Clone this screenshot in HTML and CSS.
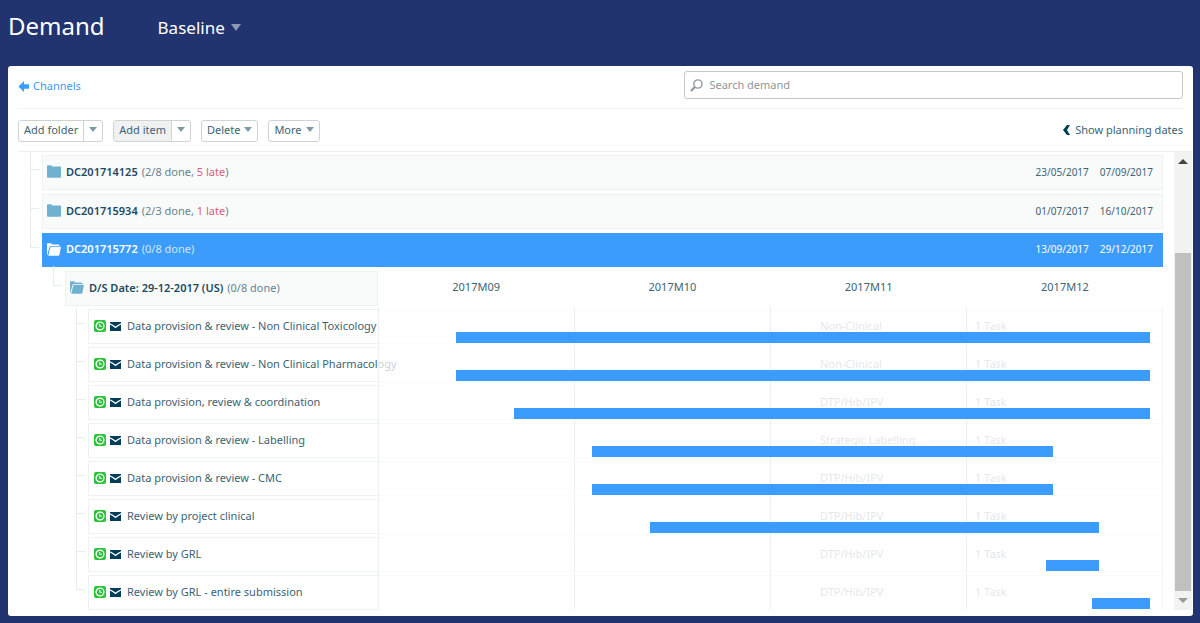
FILE: index.html
```html
<!DOCTYPE html>
<html lang="en">
<head>
<meta charset="utf-8">
<title>Demand</title>
<link rel="stylesheet" href="styles.css">
</head>
<body>
<svg class="sprite" aria-hidden="true">
  <symbol id="folder" viewBox="0 0 14 13"><path d="M0 1.2Q0 .3.9.3H4Q4.8.3 4.9 1.6H13Q14 1.6 14 2.6V12Q14 12.8 13.1 12.8H.9Q0 12.8 0 12Z"/></symbol>
  <symbol id="folder-open" viewBox="0 0 14 13"><path d="M0 1.2Q0 .3.9.3H4Q4.8.3 4.9 1.4H11.6Q12.4 1.4 12.4 2.2V3H4Q2.9 3 2.5 4L.7 10.5V12.2Q0 12 0 11Z"/><path d="M4.3 3.8H14L12.4 11.8Q12.2 12.8 11.2 12.8H1.3L3.3 4.6Q3.5 3.8 4.3 3.8Z"/></symbol>
  <symbol id="clock" viewBox="0 0 12 12"><rect width="12" height="12" rx="2" fill="#2fc139"/><circle cx="6" cy="6" r="3.9" fill="none" stroke="#fff" stroke-width="1.3"/><path d="M5.7 3.8V6.3H7.8" fill="none" stroke="#fff"/></symbol>
  <symbol id="mail" viewBox="0 0 11 9"><path d="M0 0H11V1.2Q8 2.6 5.5 4.6Q3 2.6 0 1.2ZM0 2.6Q3 4.2 5.5 6.2Q8 4.2 11 2.6V9H0Z"/></symbol>
</svg>
<header class="topbar">
  <h1>Demand</h1>
  <button class="scenario" type="button">Baseline <span class="caret"></span></button>
</header>
<main class="panel">
  <div class="searchbar">
    <a class="back" href="#"><svg width="11" height="11" viewBox="0 0 11 11" aria-hidden="true"><path d="M.5 5.5L6 0V3.3H11V7.7H6V11Z"/></svg>Channels</a>
    <label class="search">
      <svg width="13" height="13" viewBox="0 0 13 13" aria-hidden="true"><circle cx="7.9" cy="5" r="4.1"/><path d="M4.9 8L1 12" stroke-width="2.4"/></svg>
      <input type="search" placeholder="Search demand" aria-label="Search demand">
    </label>
  </div>
  <div class="toolbar">
    <div class="split"><button type="button">Add folder</button><button type="button" aria-label="Add folder options"><span class="caret"></span></button></div>
    <div class="split"><button class="pressed" type="button">Add item</button><button type="button" aria-label="Add item options"><span class="caret"></span></button></div>
    <div class="split"><button type="button">Delete <span class="caret"></span></button></div>
    <div class="split"><button type="button">More <span class="caret"></span></button></div>
    <button class="planning" type="button"><svg width="7" height="10" viewBox="0 0 7 10" aria-hidden="true"><path d="M4 0H7L4 5L7 10H4L0 5Z"/></svg>Show planning dates</button>
  </div>
  <div class="content">
    <div class="tree">
      <ul class="folders">
        <li class="row folder"><svg class="ico"><use href="#folder"/></svg><b>DC201714125</b><span class="count">(2/8 done, <em>5 late</em>)</span><time>23/05/2017</time><time>07/09/2017</time></li>
        <li class="row folder"><svg class="ico"><use href="#folder"/></svg><b>DC201715934</b><span class="count">(2/3 done, <em>1 late</em>)</span><time>01/07/2017</time><time>16/10/2017</time></li>
        <li class="row folder active"><svg class="ico"><use href="#folder-open"/></svg><b>DC201715772</b><span class="count">(0/8 done)</span><time>13/09/2017</time><time>29/12/2017</time></li>
      </ul>
      <div class="plan-head">
        <div class="row folder sub"><svg class="ico"><use href="#folder-open"/></svg><b>D/S Date: 29-12-2017 (US)</b><span class="count">(0/8 done)</span></div>
        <div class="months"><span>2017M09</span><span>2017M10</span><span>2017M11</span><span>2017M12</span></div>
      </div>
      <div class="plan">
        <ul class="tasks">
          <li class="row"><svg class="clock"><use href="#clock"/></svg><svg class="mail"><use href="#mail"/></svg><span class="name">Data provision &amp; review - Non Clinical Toxicology</span><span class="team">Non-Clinical</span><span class="amount">1 Task</span></li>
          <li class="row"><svg class="clock"><use href="#clock"/></svg><svg class="mail"><use href="#mail"/></svg><span class="name">Data provision &amp; review - Non Clinical Pharmacology</span><span class="team">Non-Clinical</span><span class="amount">1 Task</span></li>
          <li class="row"><svg class="clock"><use href="#clock"/></svg><svg class="mail"><use href="#mail"/></svg><span class="name">Data provision, review &amp; coordination</span><span class="team">DTP/Hib/IPV</span><span class="amount">1 Task</span></li>
          <li class="row"><svg class="clock"><use href="#clock"/></svg><svg class="mail"><use href="#mail"/></svg><span class="name">Data provision &amp; review - Labelling</span><span class="team">Strategic Labelling</span><span class="amount">1 Task</span></li>
          <li class="row"><svg class="clock"><use href="#clock"/></svg><svg class="mail"><use href="#mail"/></svg><span class="name">Data provision &amp; review - CMC</span><span class="team">DTP/Hib/IPV</span><span class="amount">1 Task</span></li>
          <li class="row"><svg class="clock"><use href="#clock"/></svg><svg class="mail"><use href="#mail"/></svg><span class="name">Review by project clinical</span><span class="team">DTP/Hib/IPV</span><span class="amount">1 Task</span></li>
          <li class="row"><svg class="clock"><use href="#clock"/></svg><svg class="mail"><use href="#mail"/></svg><span class="name">Review by GRL</span><span class="team">DTP/Hib/IPV</span><span class="amount">1 Task</span></li>
          <li class="row"><svg class="clock"><use href="#clock"/></svg><svg class="mail"><use href="#mail"/></svg><span class="name">Review by GRL - entire submission</span><span class="team">DTP/Hib/IPV</span><span class="amount">1 Task</span></li>
        </ul>
        <div class="gridlines"><i></i><i></i><i></i><i></i></div>
        <div class="bars">
          <div class="lane"><div class="bar" style="margin-left:9.9%;width:88.4%"></div></div>
          <div class="lane"><div class="bar" style="margin-left:9.9%;width:88.4%"></div></div>
          <div class="lane"><div class="bar" style="margin-left:17.3%;width:81%"></div></div>
          <div class="lane"><div class="bar" style="margin-left:27.2%;width:58.8%"></div></div>
          <div class="lane"><div class="bar" style="margin-left:27.2%;width:58.8%"></div></div>
          <div class="lane"><div class="bar" style="margin-left:34.7%;width:57.1%"></div></div>
          <div class="lane"><div class="bar" style="margin-left:85.1%;width:6.7%"></div></div>
          <div class="lane"><div class="bar" style="margin-left:90.9%;width:7.4%"></div></div>
        </div>
      </div>
    </div>
    <div class="scrollbar" aria-hidden="true"><span class="arrow up"></span><span class="thumb"></span><span class="arrow down"></span></div>
  </div>
</main>
</body>
</html>
```
FILE: styles.css
```css
* { box-sizing: border-box; }
body {
  margin: 0;
  padding: 0 7px 7px 8px;
  background: #22346f;
  color: #3c6374;
  font: 11px/16px "Noto Sans", "Open Sans", sans-serif;
}
button, input { font: inherit; color: inherit; }
button { border: 0; background: none; padding: 0; cursor: pointer; }
ul { list-style: none; margin: 0; padding: 0; }
svg { flex: none; fill: currentColor; }
.sprite { display: none; }

.caret {
  display: inline-block;
  border: 4px solid transparent;
  border-top: 5px solid #7d9ba9;
  border-bottom: 0;
}

.topbar {
  display: flex;
  align-items: center;
  gap: 53px;
  height: 66px;
  padding-bottom: 15px;
  color: #fff;
  font-family: "Noto Sans", "Open Sans", sans-serif;
}
.topbar h1 { margin: 0; font-size: 24px; line-height: 34px; font-weight: 400; }
.scenario { display: flex; align-items: center; gap: 6px; padding-top: 4px; font-size: 17px; line-height: 24px; }
.scenario .caret { border-width: 7px 5px 0; border-top-color: #8d97b8; }

.panel {
  display: flex;
  flex-direction: column;
  min-height: calc(100vh - 73px);
  padding-bottom: 6px;
  border-radius: 3px;
  background: #fff;
}
.searchbar {
  display: flex;
  justify-content: space-between;
  margin: 0 10px;
  padding: 5px 0 9px;
  border-bottom: 1px solid #f3f5f5;
}
.back { display: flex; align-items: center; gap: 4px; padding-top: 2px; color: #3b9cfc; text-decoration: none; }
.search {
  display: flex;
  align-items: center;
  gap: 6px;
  flex: 0 0 42.8%;
  height: 28px;
  padding: 0 6px 0 5px;
  border: 1px solid #c6c8c9;
  border-radius: 3px;
}
.search svg { fill: none; stroke: #919ba3; stroke-width: 1.4; }
.search input { flex: 1; min-width: 0; padding: 0; border: 0; outline: 0; background: none; }
.search input::placeholder { color: #8f9699; opacity: 1; }

.toolbar { display: flex; align-items: center; gap: 10px; height: 42px; margin: 0 10px; padding-top: 1px; }
.split { display: flex; height: 22px; border: 1px solid #cfd3d4; border-radius: 3px; overflow: hidden; }
.split button { display: flex; align-items: center; gap: 4px; padding: 0 5px 2px; }
.split button + button { border-left: 1px solid #cfd3d4; }
.split .pressed { background: #f0f2f2; }
.planning { display: flex; align-items: center; gap: 5px; margin-left: auto; padding-bottom: 2px; }
.planning svg { color: #003d58; }

.content { display: flex; flex: 1; border-top: 1px solid #eceff0; margin-left: 10px; margin-right: 1px; }
.tree { flex: 1; overflow: hidden; padding: 3px 11px 0 24px; }
.folders { display: grid; gap: 4px; }
.row {
  position: relative;
  display: flex;
  align-items: center;
  height: 35px;
  padding-bottom: 1px;
  border: 1px solid #eff2f2;
}
.row::before {
  content: "";
  position: absolute;
  left: -13px;
  top: -27px;
  width: 8px;
  height: 40px;
  border: solid #e6edef;
  border-width: 0 0 1px 1px;
}
.folder { background: #f9fbfb; padding: 0 9px 2px 4px; }
.ico { width: 14px; height: 13px; margin-right: 5px; color: #70b1cf; }
.folder b { margin-right: 4px; font-weight: 600; color: #1c4a5f; }
.count { margin-right: auto; color: #66838f; }
.count em { font-style: normal; color: #d9607a; }
.folder time { font-size: 10px; }
.folder time + time { margin-left: 11px; }
.active { height: 34px; background: #3b9cfc; border-color: #3b9cfc; color: #fff; }
.active .ico, .active b { color: #fff; }
.active .count { color: #cfe6fe; }

.plan-head, .plan { display: grid; grid-template-columns: 336px minmax(0, 1fr); }
.plan-head { margin: 4px 0 3px; }
.sub { margin-left: 23px; }
.sub::before { top: -6px; height: 19px; }
.months { display: grid; grid-template-columns: repeat(4, 1fr); align-items: center; padding-bottom: 3px; text-align: center; }
.tasks { grid-area: 1 / 1 / 2 / 3; display: grid; gap: 3px; padding-left: 46px; }
.tasks .row { padding-left: 5px; }
.tasks .row:first-child::before { top: -2px; height: 15px; }
.clock { width: 12px; height: 12px; margin-right: 4px; }
.mail { width: 11px; height: 9px; margin-right: 6px; color: #003d58; }
.name { flex: 1; white-space: nowrap; }
.team { width: 155px; color: #a5adb1; }
.amount { width: 187px; color: #a5adb1; }
.gridlines {
  grid-area: 1 / 2;
  z-index: 1;
  display: grid;
  grid-template-columns: repeat(4, 1fr);
  margin-top: -2px;
  background: rgba(255, 255, 255, .7);
  border-right: 1px solid #f2f4f4;
}
.gridlines i { border-left: 1px solid #eceeef; }
.bars { grid-area: 1 / 2; z-index: 2; display: grid; gap: 3px; }
.lane { display: flex; align-items: flex-end; height: 35px; padding-bottom: 1px; }
.bar { height: 11px; background: #3b9cfc; }

.scrollbar { display: flex; flex-direction: column; align-items: center; width: 18px; background: #f1f2f2; }
.arrow { border: 5px solid transparent; margin: 7px 0; }
.up { border-top: 0; border-bottom-color: #444; }
.down { border-bottom: 0; border-top-color: #999; }
.thumb { width: 16px; height: 338px; margin-top: auto; background: #c0c0c0; }
```
